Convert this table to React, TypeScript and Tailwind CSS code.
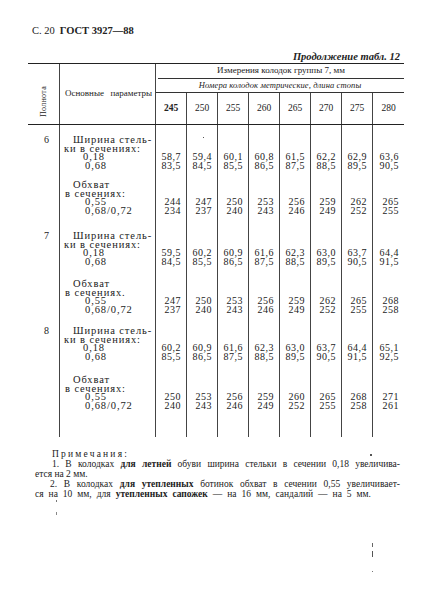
const sizes = ['245', '250', '255', '260', '265', '270', '275', '280'];

type Line = { t: string; pl: string };

const shirina: Line[] = [
  { t: 'Ширина стель-', pl: 'pl-[13px]' },
  { t: 'ки в сечениях:', pl: 'pl-[4px]' },
  { t: '0,18', pl: 'pl-[23px]' },
  { t: '0,68', pl: 'pl-[25px]' },
];

const obhvat = (sep: string): Line[] => [
  { t: 'Обхват', pl: 'pl-[13px]' },
  { t: 'в сечениях' + sep, pl: 'pl-[5px]' },
  { t: '0,55', pl: 'pl-[25px]' },
  { t: '0,68/0,72', pl: 'pl-[25px]' },
];

type Row = {
  n: string;
  box: string;
  lines: Line[];
  a: string[];
  b: string[];
};

// body rows: top padding + four 8.5px lines, values on the last two lines
const rows: Row[] = [
  {
    n: '6',
    box: 'h-[45px] pt-[11px]',
    lines: shirina,
    a: ['58,7', '59,4', '60,1', '60,8', '61,5', '62,2', '62,9', '63,6'],
    b: ['83,5', '84,5', '85,5', '86,5', '87,5', '88,5', '89,5', '90,5'],
  },
  {
    n: '',
    box: 'h-[45px] pt-[11px]',
    lines: obhvat(':'),
    a: ['244', '247', '250', '253', '256', '259', '262', '265'],
    b: ['234', '237', '240', '243', '246', '249', '252', '255'],
  },
  {
    n: '7',
    box: 'h-[51px] pt-[17px]',
    lines: shirina,
    a: ['59,5', '60,2', '60,9', '61,6', '62,3', '63,0', '63,7', '64,4'],
    b: ['84,5', '85,5', '86,5', '87,5', '88,5', '89,5', '90,5', '91,5'],
  },
  {
    n: '',
    box: 'h-[48px] pt-[14px]',
    lines: obhvat('.'),
    a: ['247', '250', '253', '256', '259', '262', '265', '268'],
    b: ['237', '240', '243', '246', '249', '252', '255', '258'],
  },
  {
    n: '8',
    box: 'h-[47px] pt-[13px]',
    lines: shirina,
    a: ['60,2', '60,9', '61,6', '62,3', '63,0', '63,7', '64,4', '65,1'],
    b: ['85,5', '86,5', '87,5', '88,5', '89,5', '90,5', '91,5', '92,5'],
  },
  {
    n: '',
    box: 'h-[76px] pt-[15px]',
    lines: obhvat(':'),
    a: ['250', '253', '256', '259', '260', '265', '268', '271'],
    b: ['240', '243', '246', '249', '252', '255', '258', '261'],
  },
];

function Specks() {
  return (
    <>
      <span className="absolute left-[203px] top-[137px] h-[1px] w-[1px] bg-[#555]" />
      <span className="absolute left-[370px] top-[454px] h-[1.5px] w-[1.5px] bg-[#555]" />
      <span className="absolute left-[56px] top-[500px] h-[2px] w-[1px] bg-[#777]" />
      <span className="absolute left-[56px] top-[512px] h-[3px] w-[1px] bg-[#888]" />
      <span className="absolute left-[372px] top-[543px] h-[4px] w-[1px] bg-[#666]" />
      <span className="absolute left-[372px] top-[551px] h-[6px] w-[1px] bg-[#555]" />
      <span className="absolute left-[372px] top-[571px] h-[1px] w-[1px] bg-[#777]" />
    </>
  );
}

export default function App() {
  return (
    <div className="relative h-[610px] w-[435px] overflow-hidden bg-white text-[#222] [font-family:'Liberation_Serif',serif]">
      <div className="box-content flex h-[14px] items-center gap-[5px] pl-[32px] pt-[24px] text-[10.5px] leading-[14px]">
        <span>С. 20</span>
        <span className="font-bold">ГОСТ 3927—88</span>
      </div>

      <div className="mt-[12px] pr-[35px] text-right text-[10.5px] font-bold italic leading-[13px]">
        Продолжение табл. 12
      </div>

      <div className="ml-[28px] w-[376px]">
        <div className="grid grid-cols-[32px_96px_repeat(8,31px)] grid-rows-[15px_14px_31px] border-t-[1.5px] border-b-[1.5px] border-[#222]">
          <div className="row-span-3 flex items-center justify-center border-r border-[#444] pt-[16px]">
            <span className="rotate-180 text-[8px] tracking-[0.3px] [writing-mode:vertical-rl]">Полнота</span>
          </div>
          <div className="row-span-3 flex items-center justify-between border-r border-[#444] pl-[5px] pr-[3px] text-[9px]">
            <span>Основные</span>
            <span>параметры</span>
          </div>
          <div className="col-span-8 ml-[2px] flex items-center justify-center border-b border-[#333] text-[9px]">
            Измерения колодок группы 7, мм
          </div>
          <div className="col-span-8 flex items-center justify-center border-b border-[#333] text-[8.5px] italic tracking-[0.1px]">
            Номера колодок метрические, длина стопы
          </div>
          {sizes.map((s, i) => (
            <div
              key={s}
              className={`flex items-center justify-center text-[9.5px] ${i < 7 ? 'border-r border-[#444]' : ''} ${i === 0 ? 'font-bold' : ''}`}
            >
              {s}
            </div>
          ))}
        </div>

        <div className="grid grid-cols-[32px_96px_repeat(8,31px)]">
          {rows.map((r, ri) => (
            <div key={ri} className="contents">
              <div className={`${r.box} border-r border-[#444] pl-[16px] text-[10px] leading-[8.5px]`}>{r.n}</div>
              <div className={`${r.box} border-r border-[#444] text-[10.5px] leading-[8.5px] tracking-[0.9px]`}>
                {r.lines.map((l, li) => (
                  <div key={li} className={`h-[8.5px] whitespace-nowrap ${l.pl}`}>
                    {l.t}
                  </div>
                ))}
              </div>
              {r.a.map((v, i) => (
                <div
                  key={i}
                  className={`${r.box} flex flex-col items-end pr-[5px] text-[10px] leading-[8.5px] tracking-[0.5px] ${i < 7 ? 'border-r border-[#444]' : ''}`}
                >
                  <div className="h-[17px]" />
                  <div className="h-[8.5px]">{v}</div>
                  <div className="h-[8.5px]">{r.b[i]}</div>
                </div>
              ))}
            </div>
          ))}
        </div>
      </div>

      <div className="mt-[12px] text-[9.5px] leading-[10px]">
        <div className="pl-[52px] tracking-[2.2px]">Примечания:</div>
        <div className="ml-[52px] mr-[35px] whitespace-nowrap text-justify [text-align-last:justify]">
          1. В колодках <b className="font-semibold">для летней</b> обуви ширина стельки в сечении 0,18 увеличива-
        </div>
        <div className="pl-[35px]">ется на 2 мм.</div>
        <div className="ml-[50px] mr-[35px] text-justify [text-align-last:justify]">
          2. В колодках <b className="font-semibold">для утепленных</b> ботинок обхват в сечении 0,55 увеличивает-
        </div>
        <div className="ml-[35px] mr-[64px] text-justify [text-align-last:justify]">
          ся на 10 мм, для <b className="font-semibold">утепленных сапожек</b> — на 16 мм, сандалий — на 5 мм.
        </div>
      </div>

      <Specks />
    </div>
  );
}
